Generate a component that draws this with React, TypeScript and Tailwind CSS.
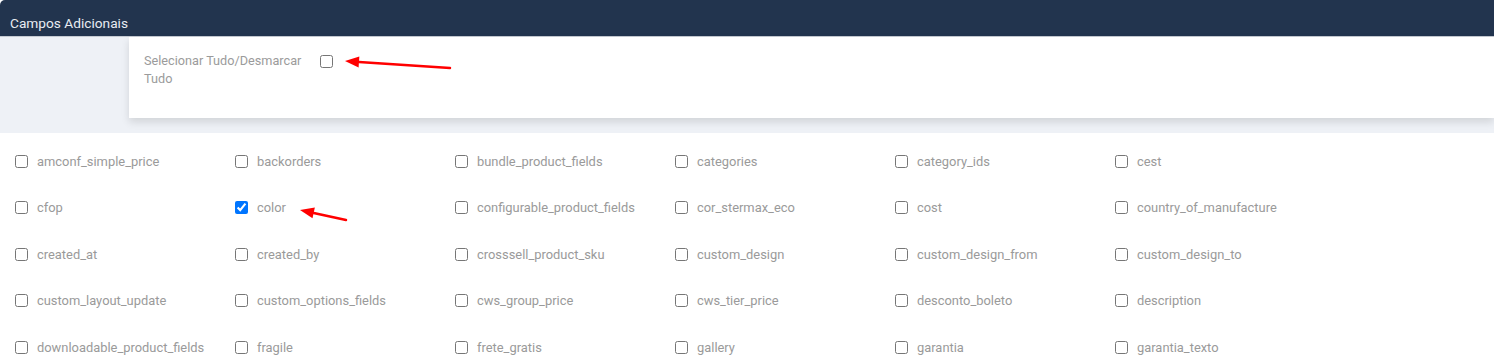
import React from "react";

const fields = [
  "amconf_simple_price", "backorders", "bundle_product_fields", "categories", "category_ids", "cest",
  "cfop", "color", "configurable_product_fields", "cor_stermax_eco", "cost", "country_of_manufacture",
  "created_at", "created_by", "crosssell_product_sku", "custom_design", "custom_design_from", "custom_design_to",
  "custom_layout_update", "custom_options_fields", "cws_group_price", "cws_tier_price", "desconto_boleto", "description",
  "downloadable_product_fields", "fragile", "frete_gratis", "gallery", "garantia", "garantia_texto",
];

function Arrow({ x1, y1, x2, y2 }: { x1: number; y1: number; x2: number; y2: number }) {
  // tail at x1,y1, tip at x2,y2
  const ang = Math.atan2(y2 - y1, x2 - x1);
  const len = 14;
  const w = 5.5;
  const bx = x2 - Math.cos(ang) * len;
  const by = y2 - Math.sin(ang) * len;
  const px = -Math.sin(ang) * w;
  const py = Math.cos(ang) * w;
  return (
    <g>
      <line x1={x1} y1={y1} x2={bx} y2={by} stroke="#f00" strokeWidth="2.5" strokeLinecap="round" />
      <polygon points={`${x2},${y2} ${bx + px},${by + py} ${bx - px},${by - py}`} fill="#f00" />
    </g>
  );
}

export default function App() {
  return (
    <div className="relative w-[1494px] h-[359px] overflow-hidden bg-white font-['Roboto',sans-serif]">
      {/* header */}
      <div className="h-[37px] bg-[#22344e] rounded-tl-[5px] border-b border-[#c5cad2] pl-[10px] pt-[14px] text-[13.7px] leading-[18px] text-[#e8ecf2]">
        Campos Adicionais
      </div>

      {/* select all */}
      <div className="bg-[#eef1f6] h-[96px] pl-[129px]">
        <div className="bg-white h-[81px] shadow-[0_4px_8px_rgba(0,0,0,0.12)] pl-[15px] pt-[15px] flex items-start">
          <div className="w-[170px] text-[12.7px] leading-[18px] text-[#9b9b9b]">
            Selecionar Tudo/Desmarcar Tudo
          </div>
          <input type="checkbox" className="m-0 mt-[3px] ml-[6px] w-[13px] h-[13px]" />
        </div>
      </div>

      {/* fields */}
      <div className="pl-[15px] pt-[5px] grid grid-cols-[repeat(6,220px)]">
        {fields.map((f) => (
          <label key={f} className="h-[46.5px] flex items-center gap-[9px] text-[12.9px] text-[#9a9a9a]">
            <input type="checkbox" defaultChecked={f === "color"} className="m-0 w-[13px] h-[13px]" />
            <span>{f}</span>
          </label>
        ))}
      </div>

      {/* annotations */}
      <svg className="absolute left-0 top-0 pointer-events-none" width="1494" height="359">
        <Arrow x1={450} y1={68} x2={345} y2={61} />
        <Arrow x1={346} y1={220} x2={300} y2={210} />
      </svg>
    </div>
  );
}
